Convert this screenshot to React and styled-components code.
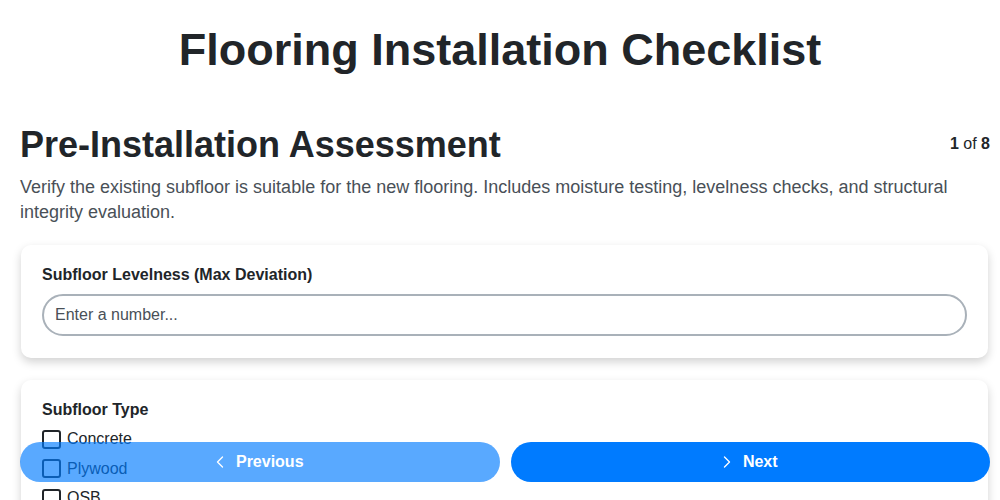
import React from 'react'
import styled, { createGlobalStyle } from 'styled-components'
import { ChevronLeft, ChevronRight } from 'lucide-react'

const GlobalStyle = createGlobalStyle`
  body {
    margin: 0;
    background: #fff;
    font-family: "Liberation Sans", Arial, sans-serif;
    color: #212529;
  }
`

const Page = styled.div`
  padding-bottom: 90px;
`

const Content = styled.div`
  padding: 0 10px 0 20px;
`

const Title = styled.h1`
  font-size: 45px;
  text-align: center;
  margin: 0;
  padding: 25px 0 48px;
  line-height: 1.1;
`

const StepHeader = styled.div`
  display: flex;
  justify-content: space-between;
  align-items: center;
`

const Heading = styled.h2`
  font-size: 36px;
  margin: 0;
  line-height: 1.2;
`

const Counter = styled.div`
  font-size: 16px;
  b { font-weight: 700; }
`

const Description = styled.p`
  font-size: 18px;
  line-height: 25px;
  color: #495057;
  margin: 9px 0 20px;
`

const Card = styled.div`
  background: #fff;
  border-radius: 10px;
  box-shadow: 0 4px 10px rgba(0, 0, 0, 0.18);
  padding: 21px 21px 22px;
  margin: 0 2px 22px 1px;
`

const Label = styled.label`
  display: block;
  font-size: 16px;
  font-weight: 700;
  line-height: 18px;
  margin-bottom: ${p => p.$gap || 10}px;
`

const Input = styled.input`
  box-sizing: border-box;
  width: 100%;
  height: 42px;
  border: 2px solid #a9b1b9;
  border-radius: 21px;
  padding: 0 11px;
  font-size: 16px;
  font-family: inherit;
  color: #212529;
  &::placeholder { color: #495057; }
  &:focus { outline: none; }
`

const Option = styled.label`
  display: flex;
  align-items: center;
  gap: 6px;
  font-size: 16px;
  height: 29.5px;
`

const Box = styled.span`
  box-sizing: border-box;
  width: 19px;
  height: 19px;
  border: 2px solid #212529;
  border-radius: 3px;
`

const Nav = styled.div`
  position: fixed;
  left: 20px;
  right: 10px;
  bottom: 18px;
  display: grid;
  grid-template-columns: 1fr 1fr;
  gap: 11px;
`

const NavButton = styled.button`
  height: 40px;
  border: none;
  border-radius: 20px;
  background: #007bff;
  color: #fff;
  font-family: inherit;
  font-size: 16px;
  font-weight: 700;
  display: flex;
  align-items: center;
  justify-content: center;
  gap: 6px;
  padding: 0 6px 0 0;
  opacity: ${p => (p.disabled ? 0.65 : 1)};
`

const options = ['Concrete', 'Plywood', 'OSB']

const App = () => (
  <Page>
    <GlobalStyle />
    <Title>Flooring Installation Checklist</Title>
    <Content>
      <StepHeader>
        <Heading>Pre-Installation Assessment</Heading>
        <Counter><b>1</b> of <b>8</b></Counter>
      </StepHeader>
      <Description>
        Verify the existing subfloor is suitable for the new flooring. Includes moisture testing,
        levelness checks, and structural integrity evaluation.
      </Description>
      <Card>
        <Label>Subfloor Levelness (Max Deviation)</Label>
        <Input placeholder="Enter a number..." />
      </Card>
      <Card>
        <Label $gap={6}>Subfloor Type</Label>
        {options.map(o => (
          <Option key={o}><Box />{o}</Option>
        ))}
      </Card>
    </Content>
    <Nav>
      <NavButton disabled><ChevronLeft size={20} strokeWidth={1.6} />Previous</NavButton>
      <NavButton><ChevronRight size={20} strokeWidth={1.6} />Next</NavButton>
    </Nav>
  </Page>
)

export default App
